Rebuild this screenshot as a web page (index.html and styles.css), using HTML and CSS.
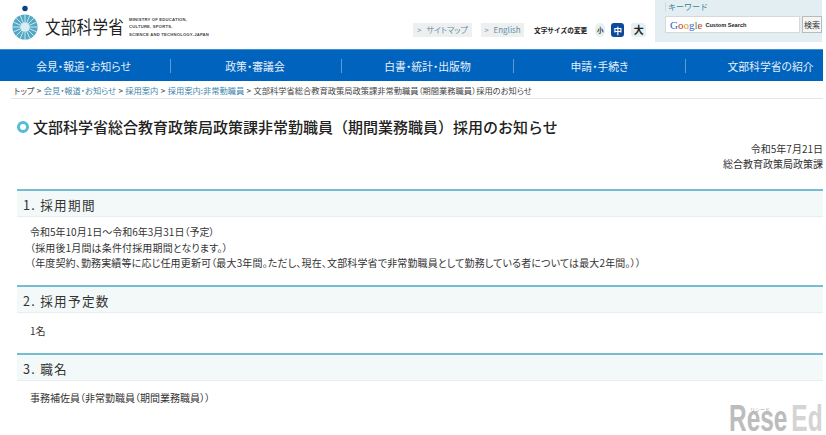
FILE: index.html
```html
<!DOCTYPE html>
<html lang="ja">
<head>
<meta charset="utf-8">
<title>文部科学省</title>
<link rel="stylesheet" href="styles.css">
</head>
<body>
<div class="page">
  <header class="top">
    <div class="logo">
      <svg class="emblem" width="28" height="35" viewBox="0 0 28 35" aria-hidden="true">
        <circle cx="14" cy="3.5" r="2.7" fill="#0b3f86"/>
        <circle cx="14" cy="22" r="12.6" fill="#52a8c4"/>
        <g stroke="#fff" stroke-width=".7">
          <path d="M14 9.5V34.5M1.5 22H26.5M5.2 13.2L22.8 30.8M22.8 13.2L5.2 30.8M9.2 10.4L18.8 33.6M18.8 10.4L9.2 33.6M2.4 17.2L25.6 26.8M25.6 17.2L2.4 26.8"/>
        </g>
        <circle cx="14" cy="22" r="4.6" fill="#d8eef4"/>
      </svg>
      <span class="logo-name">文部科学省</span>
      <span class="logo-en">MINISTRY OF EDUCATION,<br>CULTURE, SPORTS,<br>SCIENCE AND TECHNOLOGY-JAPAN</span>
    </div>
    <div class="tools">
      <a class="tool-link tool-map">&gt; サイトマップ</a>
      <a class="tool-link tool-en">&gt; English</a>
      <span class="size-label">文字サイズの変更</span>
      <span class="size size-s">小</span>
      <span class="size size-m">中</span>
      <span class="size size-l">大</span>
    </div>
    <div class="search">
      <div class="kw">キーワード</div>
      <div class="search-row">
        <div class="search-box"><span class="g-logo"><i class="b">G</i><i class="r">o</i><i class="y">o</i><i class="b">g</i><i class="gr">l</i><i class="r">e</i></span><span class="cs">Custom Search</span></div>
        <div class="search-btn">検索</div>
      </div>
    </div>
  </header>
  <nav class="nav">
    <a class="nav-item">会見・報道・お知らせ</a>
    <a class="nav-item">政策・審議会</a>
    <a class="nav-item">白書・統計・出版物</a>
    <a class="nav-item">申請・手続き</a>
    <a class="nav-item">文部科学省の紹介</a>
  </nav>
  <div class="crumbs">トップ &gt; <a>会見・報道・お知らせ</a> &gt; <a>採用案内</a> &gt; <a>採用案内:非常勤職員</a> &gt; 文部科学省総合教育政策局政策課非常勤職員（期間業務職員）採用のお知らせ</div>
  <main class="main">
    <h1 class="title"><span class="dot"></span>文部科学省総合教育政策局政策課非常勤職員（期間業務職員）採用のお知らせ</h1>
    <div class="dateline">令和5年7月21日<br>総合教育政策局政策課</div>
    <h2 class="sec sec-1">1. 採用期間</h2>
    <p class="txt txt-1">令和5年10月1日～令和6年3月31日（予定）<br><span class="wide">（採用後1月間は条件付採用期間となります。）<br>（年度契約、勤務実績等に応じ任用更新可（最大3年間。ただし、現在、文部科学省で非常勤職員として勤務している者については最大2年間。））</span></p>
    <h2 class="sec">2. 採用予定数</h2>
    <p class="txt txt-2">1名</p>
    <h2 class="sec">3. 職名</h2>
    <p class="txt txt-3">事務補佐員（非常勤職員（期間業務職員））</p>
  </main>
</div>
<div class="mark"><span class="mark-kana">リシード</span><span class="mark-word">Rese<span class="mark-ed">Ed</span></span></div>
</body>
</html>
```
FILE: styles.css
```css
* { box-sizing: border-box; }
html, body { margin: 0; height: 435px; overflow: hidden; background: #fff; }
body { font-family: "Noto Sans CJK JP", "Liberation Sans", sans-serif; color: #333; position: relative; }
.page { width: 823px; }
.top { height: 49px; display: flex; align-items: flex-start; }
.logo { display: flex; align-items: center; padding: 5px 0 0 11px; width: 412px; }
.emblem { flex: none; }
.logo-name { font-size: 15.5px; letter-spacing: .3px; color: #222; margin: 7px 0 0 6px; line-height: 26px; white-space: nowrap; transform: scaleY(1.15); }
.logo-en { font-family: "Liberation Sans", sans-serif; font-size: 4.2px; line-height: 7.2px; font-weight: bold; color: #444; margin: 9px 0 0 5px; letter-spacing: .2px; white-space: nowrap; }
.tools { display: flex; align-items: center; width: 244px; padding-top: 17px; height: 42px; }
.tool-link { background: #eef0f0; color: #5c8fa8; font-size: 8px; height: 14px; line-height: 14px; text-align: center; white-space: nowrap; word-spacing: 3px; font-feature-settings: "palt"; }
.tool-map { width: 59px; margin-left: 1px; }
.tool-en { width: 43px; margin-left: 9px; }
.size-label { font-size: 6.7px; font-weight: bold; color: #222; margin-left: 10px; white-space: nowrap; }
.size { width: 13px; height: 14px; border-radius: 3px; text-align: center; font-size: 8px; line-height: 14px; flex: none; font-weight: bold; }
.size-s { background: #e8f1f2; margin-left: 8px; width: 10px; font-size: 6.5px; border-radius: 7px; }
.size-m { background: #0b4b99; color: #fff; margin-left: 6px; font-size: 8.5px; }
.size-l { background: #e4f0f3; color: #222; margin-left: 7px; font-size: 10px; width: 15px; }
.search { width: 167px; height: 42px; background: #e3eef2; padding: 2px 0 0 10px; flex: none; margin-left: -1px; }
.kw { font-size: 8px; line-height: 10px; color: #3f7fa0; border-left: 1px solid #cfdde2; padding-left: 2px; }
.search-row { display: flex; margin-top: 4px; align-items: stretch; }
.search-box { width: 135px; height: 17px; background: #fff; border: 1px solid #d8d8d8; display: flex; align-items: center; padding-left: 4px; }
.g-logo { font-family: "Liberation Serif", serif; font-size: 11px; line-height: 14px; }
.g-logo i { font-style: normal; }
.b { color: #3a62c8; } .r { color: #c8372c; } .y { color: #cfa11c; } .gr { color: #3f9c4c; }
.cs { font-family: "Liberation Sans", sans-serif; font-size: 5.6px; color: #222; margin-left: 3px; font-weight: bold; white-space: nowrap; }
.search-btn { width: 20px; height: 17px; margin-left: 2px; background: #f4f4f4; border: 1px solid #bbb; font-size: 8px; line-height: 15px; text-align: center; color: #333; white-space: nowrap; overflow: hidden; flex: none; }
.nav { height: 32px; background: #0063bd; border-top: 1px solid #3e8fd0; display: flex; align-items: center; }
.nav-item { flex: 1 1 0; text-align: center; color: #e6f0fa; font-size: 10.8px; line-height: 14px; border-left: 1px solid #5d9bd6; white-space: nowrap; font-feature-settings: "palt"; }
.nav-item:first-child { border-left: 0; flex: 0 0 170px; padding-right: 3px; }
.nav-item:nth-child(2) { flex: 0 0 171px; padding-right: 2px; }
.nav-item:nth-child(3) { flex: 0 0 172px; }
.nav-item:nth-child(4) { flex: 0 0 172px; }
.nav-item:nth-child(5) { flex: 0 0 138px; padding-left: 32px; }
.crumbs { height: 18px; margin-left: 11px; padding-left: 3px; border-bottom: 1px solid #e5e5e5; font-size: 8.25px; word-spacing: .5px; line-height: 18px; color: #444; white-space: nowrap; font-feature-settings: "palt"; }
.crumbs a { color: #3d85ab; }
.main { padding-left: 17px; }
.title { margin: 18px 0 0; font-size: 15px; line-height: 20px; font-weight: 500; color: #222; display: flex; align-items: center; white-space: nowrap; }
.dot { width: 12px; height: 12px; border-radius: 50%; border: 3.5px solid #55bcd5; background: #fff; margin-right: 4px; flex: none; }
.dateline { text-align: right; font-size: 10px; line-height: 15px; margin-top: 4px; height: 38px; color: #333; white-space: nowrap; }
.sec { margin: 0; height: 28px; border-top: 2px solid #74bdd1; background: #f3f8f9; border-bottom: 1px solid #e8eeef; font-size: 12.6px; font-weight: 400; line-height: 27px; padding-left: 6px; letter-spacing: 1.3px; color: #333; white-space: nowrap; }
.sec-1 { margin-top: 10px; }
.txt { margin: 0; padding-left: 13px; font-size: 10px; line-height: 15.5px; color: #333; white-space: nowrap; font-feature-settings: "palt"; }
.wide { letter-spacing: .15px; }
.txt-1 { padding-top: 7px; height: 68px; }
.txt-2 { padding-top: 10px; height: 40px; }
.txt-3 { padding-top: 9px; }
.mark { position: absolute; left: 729px; top: 398px; width: 97px; height: 37px; overflow: hidden; white-space: nowrap; }
.mark-word { display: block; width: 145px; font-family: "Liberation Sans", sans-serif; font-weight: bold; font-size: 37px; line-height: 42px; color: #bcbcbc; transform: scaleX(.66); transform-origin: left top; }
.mark-ed { color: #d4d4d4; margin-left: 6px; }
.mark-kana { position: absolute; left: 21px; top: 8px; font-size: 5px; line-height: 6px; color: #999; font-family: "Noto Sans CJK JP", sans-serif; z-index: 1; }
```
